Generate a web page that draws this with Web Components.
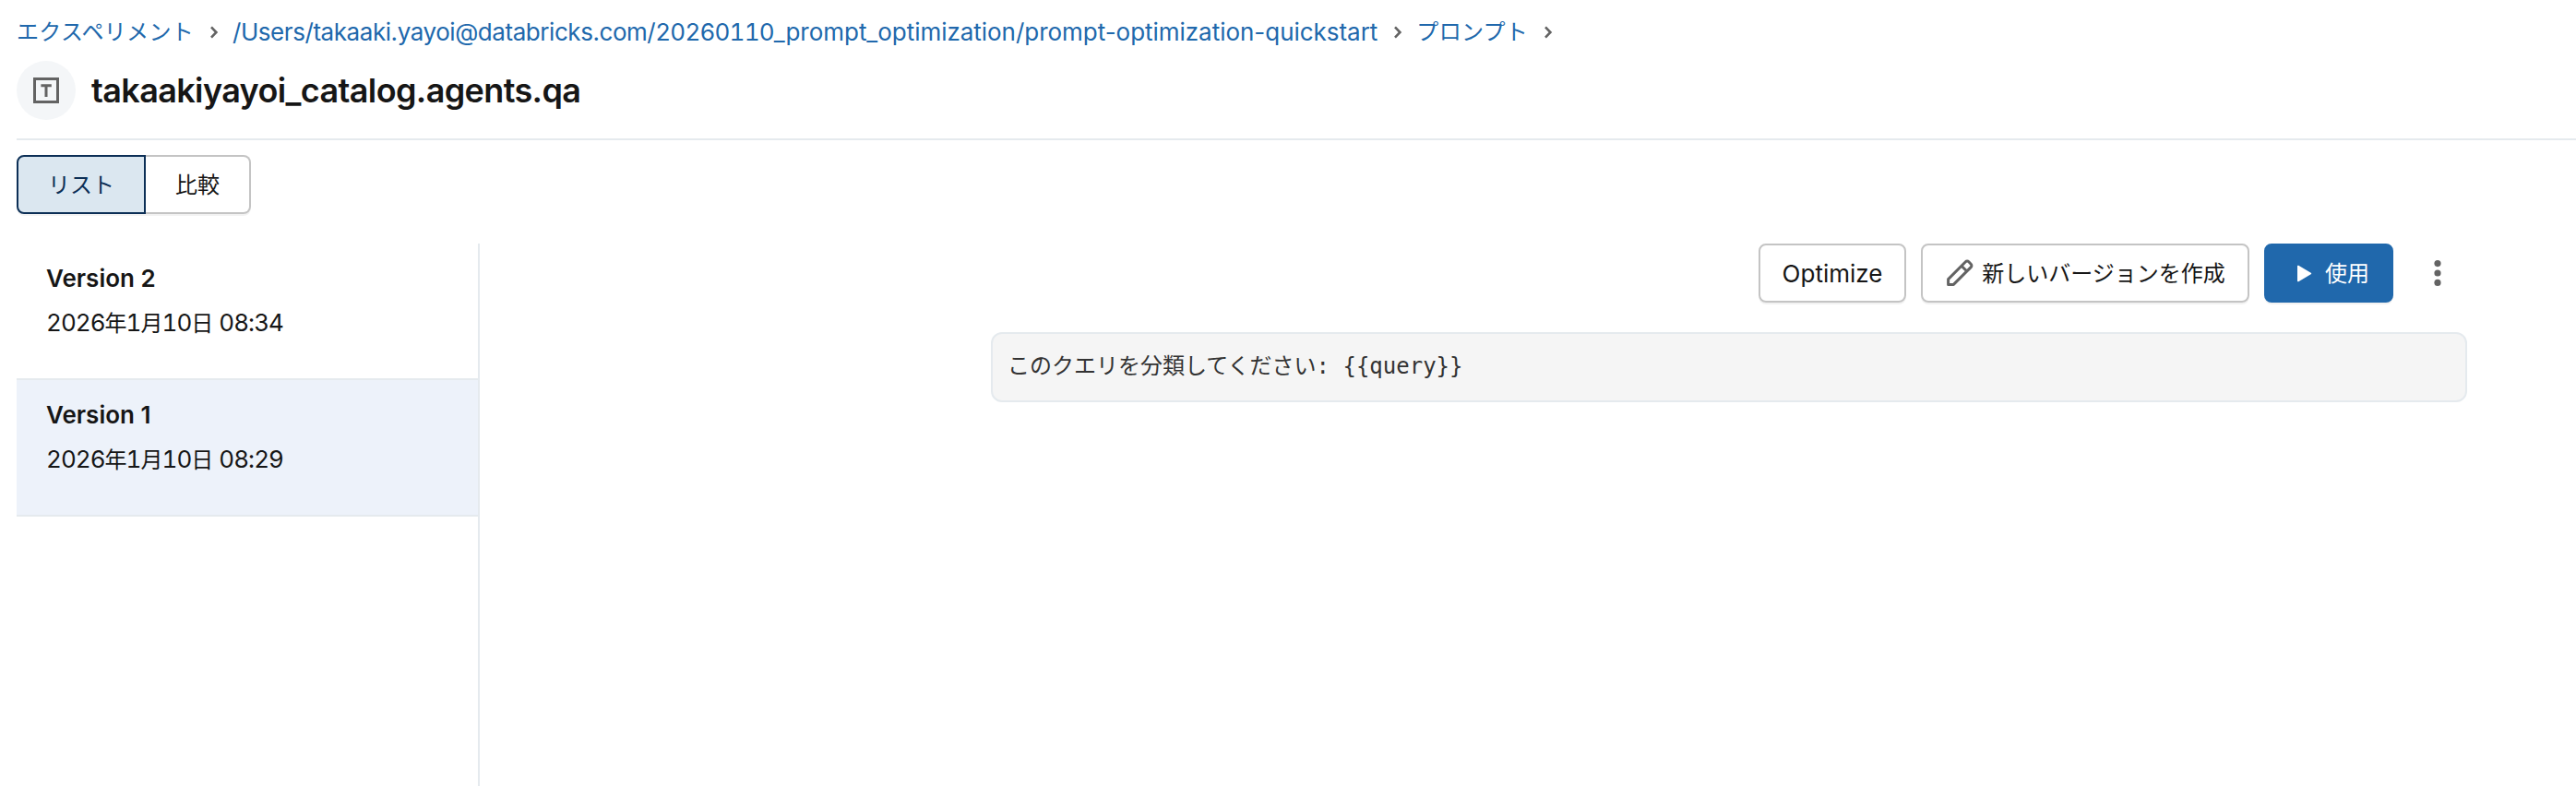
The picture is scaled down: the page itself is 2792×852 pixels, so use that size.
<!DOCTYPE html>
<html lang="ja">
<head>
<meta charset="utf-8">
<title>takaakiyayoi_catalog.agents.qa</title>
<style>
  body {
    margin: 0;
    background: #fff;
    color: #161616;
    font-family: Inter, "Noto Sans CJK JP", sans-serif;
    font-size: 26px;
    line-height: 40px;
  }
</style>
</head>
<body>
<prompt-page></prompt-page>
<script>
const ICONS = {
  chevron: `<svg viewBox="0 0 16 16"><path fill="none" stroke="currentColor" stroke-width="1.3" d="M6.5 5.2 9.2 8 6.5 10.8"/></svg>`,
  text: `<svg viewBox="0 0 16 16"><path fill="none" stroke="currentColor" stroke-width="1.5" d="M1.75 1.75h12.5v12.5H1.75zM5.2 5.4h5.7M8 5.4v6.1"/></svg>`,
  pencil: `<svg viewBox="0 0 16 16"><path fill="none" stroke="currentColor" stroke-width="1.5" stroke-linejoin="round" d="M1.8 14.2v-2.9L11.2 1.9a1.2 1.2 0 0 1 1.7 0l1.2 1.2a1.2 1.2 0 0 1 0 1.7L4.7 14.2zM9 4.1 11.9 7"/></svg>`,
  play: `<svg viewBox="0 0 16 16"><path fill="currentColor" d="M5 4.3v7.9c0 .35.36.55.65.37l6.7-3.95a.43.43 0 0 0 0-.74l-6.7-3.95A.43.43 0 0 0 5 4.3z"/></svg>`,
  overflow: `<svg viewBox="0 0 16 16"><g fill="currentColor"><circle cx="8" cy="2.05" r="2.05"/><circle cx="8" cy="8" r="2.05"/><circle cx="8" cy="13.95" r="2.05"/></g></svg>`,
};

class AppIcon extends HTMLElement {
  connectedCallback() {
    this.attachShadow({ mode: "open" });
    this.shadowRoot.innerHTML = `
      <style>
        :host { display: block; flex: none; width: 32px; height: 32px; color: #636363; }
        svg { display: block; width: 100%; height: 100%; overflow: visible; }
      </style>
      ${ICONS[this.getAttribute("name")]}
    `;
  }
}

class CrumbLink extends HTMLElement {
  connectedCallback() {
    this.attachShadow({ mode: "open" });
    this.shadowRoot.innerHTML = `
      <style>
        :host { display: flex; align-items: center; white-space: nowrap; }
        a { color: #2068ac; }
        app-icon { margin: 0 4px 0 6px; }
      </style>
      <a><slot></slot></a>
      <app-icon name="chevron"></app-icon>
    `;
  }
}

class PageHeader extends HTMLElement {
  connectedCallback() {
    this.attachShadow({ mode: "open" });
    this.shadowRoot.innerHTML = `
      <style>
        :host { display: block; border-bottom: 2px solid #e5eaee; height: 135px; }
        nav { display: flex; height: 40px; }
        .title { display: flex; align-items: center; gap: 17px; margin-top: 11px; }
        .badge {
          display: flex;
          align-items: center;
          justify-content: center;
          width: 64px;
          height: 64px;
          border-radius: 50%;
          background: #f4f6f8;
        }
        h1 { margin: 0; font-size: 36px; font-weight: 600; line-height: 48px; letter-spacing: -0.63px; }
      </style>
      <nav><slot name="crumbs"></slot></nav>
      <div class="title">
        <div class="badge"><app-icon name="text"></app-icon></div>
        <h1><slot></slot></h1>
      </div>
    `;
  }
}

class ViewToggle extends HTMLElement {
  connectedCallback() {
    this.attachShadow({ mode: "open" });
    this.shadowRoot.innerHTML = `
      <style>
        :host { display: flex; height: 64px; font-size: 24px; }
        div {
          box-sizing: border-box;
          height: 64px;
          border: 2px solid #c4c4c4;
          line-height: 62px;
          text-align: center;
          box-shadow: 0 2px 0 rgba(0, 0, 0, 0.05);
        }
        .active {
          width: 140px;
          border-color: #0c2f56;
          border-radius: 8px 0 0 8px;
          background: #dbe7f0;
          color: #0c2f56;
        }
        .other { width: 114px; border-left: 0; border-radius: 0 8px 8px 0; }
      </style>
      <div class="active"><slot name="active"></slot></div>
      <div class="other"><slot name="other"></slot></div>
    `;
  }
}

class VersionItem extends HTMLElement {
  connectedCallback() {
    this.attachShadow({ mode: "open" });
    this.shadowRoot.innerHTML = `
      <style>
        :host {
          display: flex;
          flex-direction: column;
          gap: 8px;
          box-sizing: border-box;
          height: 148px;
          padding: 18px 32px 0;
          border-bottom: 2px solid #e5eaee;
        }
        :host([selected]) { background: #edf2fa; }
        .name { font-weight: 600; }
        .date { font-feature-settings: "tnum"; letter-spacing: -0.97px; word-spacing: 1px; }
      </style>
      <div class="name"><slot></slot></div>
      <div class="date"><slot name="date"></slot></div>
    `;
  }
}

class ActionButton extends HTMLElement {
  connectedCallback() {
    const icon = this.getAttribute("icon");
    this.attachShadow({ mode: "open" });
    this.shadowRoot.innerHTML = `
      <style>
        :host {
          display: flex;
          align-items: center;
          justify-content: center;
          gap: 8px;
          box-sizing: border-box;
          height: 64px;
          border: 2px solid #c4c4c4;
          border-radius: 8px;
          white-space: nowrap;
          box-shadow: 0 2px 0 rgba(0, 0, 0, 0.05);
        }
        :host([primary]) { border-color: #2068ac; background: #2068ac; color: #fff; }
        :host([primary]) app-icon { color: #fff; }
        span { padding-top: 2px; }
      </style>
      ${icon ? `<app-icon name="${icon}"></app-icon>` : ""}
      <span><slot></slot></span>
    `;
  }
}

class PromptPage extends HTMLElement {
  connectedCallback() {
    this.attachShadow({ mode: "open" });
    this.shadowRoot.innerHTML = `
      <style>
        :host {
          display: flex;
          flex-direction: column;
          box-sizing: border-box;
          height: 852px;
          padding: 15px 0 0 18px;
          overflow: hidden;
        }
        .ja { font-size: 24px; }
        crumb-link.ja { letter-spacing: 0.3px; }
        .path { letter-spacing: -0.44px; }
        .digits { font-feature-settings: "tnum"; letter-spacing: -0.8px; }
        .rest { letter-spacing: -0.03px; }
        view-toggle { margin-top: 16px; }
        main { display: flex; flex: 1; margin-top: 32px; }
        aside { box-sizing: border-box; width: 502px; border-right: 2px solid #e5eaee; }
        .content { flex: 1; padding-right: 118px; }
        .actions { display: flex; justify-content: flex-end; gap: 16px; }
        .optimize { width: 160px; }
        .create { width: 356px; }
        .use { width: 140px; }
        .menu { display: flex; align-items: center; justify-content: center; width: 64px; height: 64px; }
        .menu app-icon { width: 28px; height: 28px; }
        pre {
          box-sizing: border-box;
          width: 1600px;
          height: 76px;
          margin: 32px 0 0 auto;
          padding: 0 16px;
          border: 2px solid #e5eaee;
          border-radius: 12px;
          background: #f5f5f5;
          color: #333;
          font: 24px/70px "DejaVu Sans Mono", "Noto Sans CJK JP", monospace;
        }
      </style>
      <page-header>
        <crumb-link slot="crumbs" class="ja">エクスペリメント</crumb-link>
        <crumb-link slot="crumbs" class="path">/Users/takaaki.yayoi@databricks.com/<span class="digits">20260110</span><span class="rest">_prompt_optimization/prompt-optimization-quickstart</span></crumb-link>
        <crumb-link slot="crumbs" class="ja">プロンプト</crumb-link>
        takaakiyayoi_catalog.agents.qa
      </page-header>
      <view-toggle><span slot="active">リスト</span><span slot="other">比較</span></view-toggle>
      <main>
        <aside>
          <version-item>Version 2<span slot="date">2026<span class="ja">年</span>1<span class="ja">月</span>10<span class="ja">日</span> 08:34</span></version-item>
          <version-item selected>Version 1<span slot="date">2026<span class="ja">年</span>1<span class="ja">月</span>10<span class="ja">日</span> 08:29</span></version-item>
        </aside>
        <div class="content">
          <div class="actions">
            <action-button class="optimize">Optimize</action-button>
            <action-button class="create ja" icon="pencil">新しいバージョンを作成</action-button>
            <action-button class="use ja" icon="play" primary>使用</action-button>
            <div class="menu"><app-icon name="overflow"></app-icon></div>
          </div>
          <pre>このクエリを分類してください: {{query}}</pre>
        </div>
      </main>
    `;
  }
}

customElements.define("app-icon", AppIcon);
customElements.define("crumb-link", CrumbLink);
customElements.define("page-header", PageHeader);
customElements.define("view-toggle", ViewToggle);
customElements.define("version-item", VersionItem);
customElements.define("action-button", ActionButton);
customElements.define("prompt-page", PromptPage);
</script>
</body>
</html>
